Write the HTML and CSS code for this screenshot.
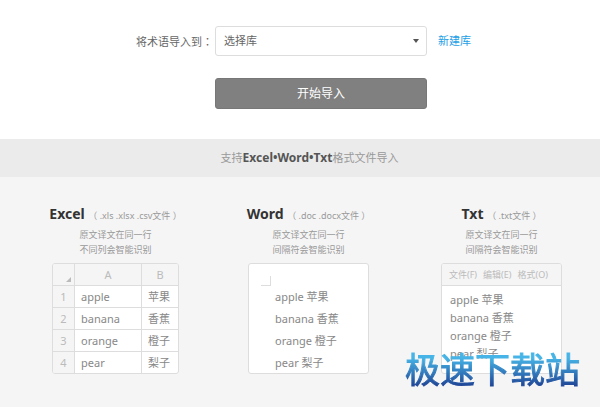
FILE: index.html
```html
<!DOCTYPE html>
<html lang="zh-CN">
<head>
<meta charset="utf-8">
<title>导入术语</title>
<link rel="stylesheet" href="styles.css">
</head>
<body>
<form class="import-form">
  <label class="label" for="library">将术语导入到<span class="colon" lang="zh-TW">：</span></label>
  <div class="select-wrap">
    <select class="select" id="library"><option>选择库</option></select>
    <svg class="arrow" viewBox="0 0 6 4" aria-hidden="true"><path d="M0 0h6L3 4z"/></svg>
  </div>
  <a class="new-link" href="#">新建库</a>
  <button class="start" type="button">开始导入</button>
</form>
<div class="banner">支持<strong>Excel•Word•Txt</strong>格式文件导入</div>
<main class="formats">
  <section class="format">
    <h2 class="title">Excel <small>（ .xls .xlsx .csv文件 ）</small></h2>
    <p class="hint">原文译文在同一行<br>不同列会智能识别</p>
    <div class="card sheet-card">
      <table class="sheet">
        <thead><tr><th class="corner"><svg viewBox="0 0 6 6" aria-hidden="true"><path d="M6 0v6H0z"/></svg></th><th>A</th><th>B</th></tr></thead>
        <tbody>
          <tr><th>1</th><td>apple</td><td>苹果</td></tr>
          <tr><th>2</th><td>banana</td><td>香蕉</td></tr>
          <tr><th>3</th><td>orange</td><td>橙子</td></tr>
          <tr><th>4</th><td>pear</td><td>梨子</td></tr>
        </tbody>
      </table>
    </div>
  </section>
  <section class="format">
    <h2 class="title">Word <small>（ .doc .docx文件 ）</small></h2>
    <p class="hint">原文译文在同一行<br>间隔符会智能识别</p>
    <div class="card page">
      <div class="margin-mark"></div>
      <ul class="lines word-lines"><li>apple 苹果</li><li>banana 香蕉</li><li>orange 橙子</li><li>pear 梨子</li></ul>
    </div>
  </section>
  <section class="format">
    <h2 class="title">Txt <small>（ .txt文件 ）</small></h2>
    <p class="hint">原文译文在同一行<br>间隔符会智能识别</p>
    <div class="card page">
      <div class="menu"><span>文件(F)</span><span>编辑(E)</span><span>格式(O)</span></div>
      <ul class="lines txt-lines"><li>apple 苹果</li><li>banana 香蕉</li><li>orange 橙子</li><li>pear 梨子</li></ul>
    </div>
  </section>
  <div class="watermark">极速下载站</div>
</main>
</body>
</html>
```
FILE: styles.css
```css
* { box-sizing: border-box; }
body {
  margin: 0;
  min-height: 100vh;
  display: flex;
  flex-direction: column;
  background: #fff;
  color: #666;
  font: 11px/16px "Noto Sans", "Noto Sans CJK SC", sans-serif;
}
.import-form {
  display: grid;
  grid-template-columns: 1fr 212px 173px;
  row-gap: 22px;
  align-items: center;
  padding: 26px 0 30px;
}
.label { justify-self: end; padding-right: 2px; }
.colon { font-family: "Noto Sans CJK TC", sans-serif; }
.select-wrap { position: relative; }
.select {
  display: block;
  width: 100%;
  height: 30px;
  padding: 0 8px;
  appearance: none;
  border: 1px solid #ddd;
  border-radius: 3px;
  background: #fff;
  color: #666;
  font: inherit;
}
.arrow {
  position: absolute;
  right: 8px;
  top: 13px;
  width: 6px;
  height: 4px;
  fill: #555;
  pointer-events: none;
}
.new-link {
  padding-left: 11px;
  color: #1ea0e6;
  text-decoration: none;
}
.start {
  grid-column: 2;
  height: 31px;
  padding: 0;
  border: 1px solid #777;
  border-radius: 3px;
  background: #808080;
  color: #fff;
  font: 12px/16px "Noto Sans", "Noto Sans CJK SC", sans-serif;
}
.banner {
  padding: 11px 0;
  padding-left: 19px;
  background: #ebebeb;
  color: #999;
  text-align: center;
}
.banner strong { color: #555; font-size: 12px; }
.formats {
  position: relative;
  flex: 1;
  display: grid;
  grid-template-columns: repeat(3, 1fr);
  align-items: start;
  padding: 26px 2px 32px 19px;
  background: #f5f5f5;
}
.format {
  display: flex;
  flex-direction: column;
  align-items: center;
}
.title {
  margin: 0;
  color: #333;
  font-size: 14px;
  line-height: 22px;
  white-space: nowrap;
}
.title small { color: #999; font-size: 9px; font-weight: 400; }
.hint {
  margin: 0 0 6px;
  color: #999;
  font-size: 9px;
  line-height: 15px;
  text-align: center;
}
.card {
  border: 1px solid #ddd;
  border-radius: 3px;
  background: #fff;
  color: #888;
  overflow: hidden;
}
.sheet-card { width: 127px; }
.page { width: 121px; height: 111px; }
.sheet {
  width: 100%;
  table-layout: fixed;
  border-collapse: separate;
  border-spacing: 0;
}
.sheet th, .sheet td {
  height: 22px;
  padding: 0;
  border-right: 1px solid #ddd;
  border-bottom: 1px solid #ddd;
  font-weight: 400;
}
.sheet th { background: #f5f5f5; color: #bbb; }
.sheet td { padding-left: 6px; }
.sheet tr > :first-child { width: 22px; }
.sheet tr > :nth-child(2) { width: 67px; }
.sheet tr > :last-child { border-right: 0; }
.sheet tbody tr:last-child > * { height: 21px; border-bottom: 0; }
.sheet .corner { padding: 0 3px 3px 0; text-align: right; vertical-align: bottom; }
.corner svg { display: block; width: 5px; height: 5px; margin-left: auto; fill: #bbb; }
.margin-mark {
  width: 10px;
  height: 10px;
  margin: 12px 0 0 12px;
  border-right: 1px solid #ddd;
  border-bottom: 1px solid #ddd;
}
.lines { margin: 0; list-style: none; }
.word-lines { padding: 0 0 0 26px; line-height: 22px; }
.txt-lines { padding: 5px 0 0 8px; line-height: 18px; }
.menu {
  display: flex;
  gap: 6px;
  height: 22px;
  padding-left: 7px;
  border-bottom: 1px solid #ddd;
  background: #f5f5f5;
  color: #bbb;
  font-size: 9px;
  line-height: 21px;
  white-space: nowrap;
}
.watermark {
  position: absolute;
  right: 20px;
  bottom: 17px;
  background: linear-gradient(#46b4e6 10%, #46b4e6 20%, #1f4596 90%);
  background-clip: text;
  -webkit-background-clip: text;
  color: transparent;
  -webkit-text-stroke: 1px transparent;
  font-size: 35px;
  font-weight: 400;
  line-height: 40px;
}
```
